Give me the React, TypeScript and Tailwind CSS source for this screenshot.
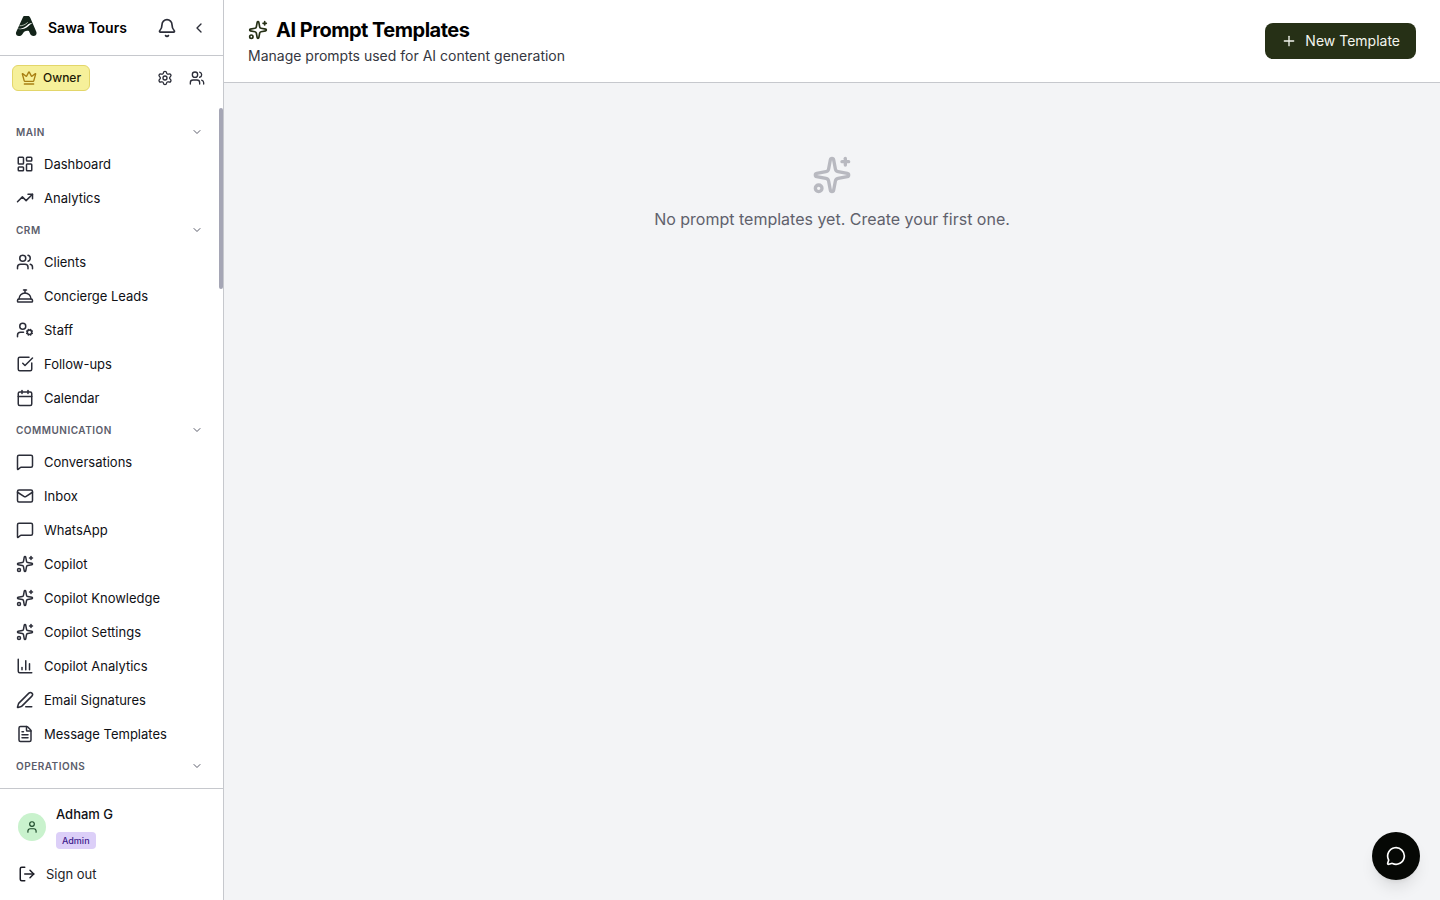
import React from 'react';
import {
  Bell,
  Calendar,
  ChartColumn,
  ChevronDown,
  ChevronLeft,
  ConciergeBell,
  Crown,
  FileText,
  LayoutDashboard,
  LogOut,
  Mail,
  MessageCircle,
  MessageSquare,
  PenLine,
  Plus,
  Settings,
  Sparkles,
  SquareCheckBig,
  TrendingUp,
  User,
  UserCog,
  Users,
} from 'lucide-react';

type IconType = React.ComponentType<{ className?: string }>;

const sections: { title: string; items: { label: string; icon: IconType }[] }[] = [
  {
    title: 'Main',
    items: [
      { label: 'Dashboard', icon: LayoutDashboard },
      { label: 'Analytics', icon: TrendingUp },
    ],
  },
  {
    title: 'CRM',
    items: [
      { label: 'Clients', icon: Users },
      { label: 'Concierge Leads', icon: ConciergeBell },
      { label: 'Staff', icon: UserCog },
      { label: 'Follow-ups', icon: SquareCheckBig },
      { label: 'Calendar', icon: Calendar },
    ],
  },
  {
    title: 'Communication',
    items: [
      { label: 'Conversations', icon: MessageSquare },
      { label: 'Inbox', icon: Mail },
      { label: 'WhatsApp', icon: MessageSquare },
      { label: 'Copilot', icon: Sparkles },
      { label: 'Copilot Knowledge', icon: Sparkles },
      { label: 'Copilot Settings', icon: Sparkles },
      { label: 'Copilot Analytics', icon: ChartColumn },
      { label: 'Email Signatures', icon: PenLine },
      { label: 'Message Templates', icon: FileText },
    ],
  },
  { title: 'Operations', items: [] },
];

const Logo = () => (
  <svg viewBox="0 2 24 24" className="size-6" aria-hidden="true">
    <path
      d="M8.800 3.400C9.600 1.700 11 1.200 12.800 1.400c1.700.2 2.900 1 3.600 2.700l5.800 13.500c1 2.400-.2 4.400-2.600 4.400-1.900 0-3-1-3.700-2.800l-1-2.300c-3-.6-5 .4-6.200 2.800-.8 1.600-2.100 2.300-3.900 2.300-2.400 0-3.500-2-2.500-4.300z"
      fill="#13241a"
    />
    <path d="M2.600 14.800c4.400.2 8-1.100 10.600-3.600 1.400-1.400 2.900-2 5-1.800-1.900.7-2.700 1.700-3.900 2.900-2.700 2.500-6.900 3.600-11.700 2.500z" fill="#fff" />
    <path d="M5.500 11.800c3.200 0 5.800-1.100 8.200-3.400" fill="none" stroke="#c4cec0" strokeWidth=".9" />
  </svg>
);

const Sidebar = () => (
  <aside className="flex h-screen w-56 shrink-0 flex-col border-r border-[#c6c8cd] bg-white">
    <div className="flex h-14 shrink-0 items-center border-b border-[#c6c8cd] pr-[10px] pl-[14px]">
      <Logo />
      <span className="ml-[10px] flex-1 text-sm font-semibold text-black">Sawa Tours</span>
      <button type="button" aria-label="Notifications" className="flex size-9 items-center justify-center text-[#2b2d38]">
        <Bell className="size-5" />
      </button>
      <button type="button" aria-label="Collapse sidebar" className="flex size-7 items-center justify-center text-[#2b2d38]">
        <ChevronLeft className="size-4" />
      </button>
    </div>

    <div className="flex h-[52px] shrink-0 items-start justify-between px-3 pt-[9px]">
      <span className="flex h-[26px] items-center gap-[6px] rounded-md border border-[#e3d66a] bg-[#f6f09a] px-2 text-xs font-medium text-[#1f1a05]">
        <Crown className="size-4 text-[#a87f12]" />
        Owner
      </span>
      <div className="flex gap-1 text-[#2b2d38]">
        <button type="button" aria-label="Settings" className="flex h-[26px] w-7 items-center justify-center">
          <Settings className="size-4" />
        </button>
        <button type="button" aria-label="Team" className="flex h-[26px] w-7 items-center justify-center">
          <Users className="size-4" />
        </button>
      </div>
    </div>

    <div className="relative min-h-0 flex-1">
      <nav className="h-full overflow-hidden px-2 pt-[9px]">
        {sections.map((section) => (
          <div key={section.title}>
            <button
              type="button"
              className="flex h-[30px] w-full items-center justify-between pr-3 pl-2 text-[10px] font-semibold tracking-wider text-[#5b5d6b] uppercase"
            >
              {section.title}
              <ChevronDown className="size-3" />
            </button>
            {section.items.map(({ label, icon: Icon }) => (
              <a key={label} href="#" className="flex h-[34px] items-center gap-[10px] px-2 text-[13px] leading-5 text-[#0f1015]">
                <Icon className="size-[18px] text-[#2b2d38]" />
                {label}
              </a>
            ))}
          </div>
        ))}
      </nav>
      <div className="absolute top-0 right-0 h-[181px] w-1 rounded-full bg-[#a5a6b5]" />
    </div>

    <div className="shrink-0 border-t border-[#c6c8cd] px-[18px] pt-[15px] pb-2">
      <div className="flex items-center gap-[10px]">
        <div className="flex size-7 items-center justify-center rounded-full bg-[#c9f2cd] text-[#1d4a2a]">
          <User className="size-[14px]" />
        </div>
        <div className="flex flex-col items-start gap-2">
          <span className="text-[13px] leading-5 font-medium text-[#0f1015]">Adham G</span>
          <span className="rounded-sm bg-[#dccff8] px-[6px] text-[9px] leading-[17px] font-medium text-[#3c1a8c]">Admin</span>
        </div>
      </div>
      <button type="button" className="mt-[7px] flex h-9 items-center gap-[10px] text-[13px] leading-5 text-[#1c1d26]">
        <LogOut className="size-[18px]" />
        Sign out
      </button>
    </div>
  </aside>
);

const App: React.FC = () => {
  return (
    <div className="flex min-h-screen bg-[#f3f4f6] font-[Inter,sans-serif]">
      <Sidebar />
      <main className="min-w-0 flex-1">
        <header className="flex items-center justify-between border-b border-[#c6c8cd] bg-white px-6 py-4">
          <div>
            <h1 className="flex items-center gap-2 text-xl leading-7 font-bold tracking-tight text-black">
              <Sparkles className="size-5 text-[#263016]" />
              AI Prompt Templates
            </h1>
            <p className="mt-[2px] text-sm text-[#353741]">Manage prompts used for AI content generation</p>
          </div>
          <button type="button" className="flex h-9 items-center gap-2 rounded-lg bg-[#263016] px-4 text-sm text-[#f3f5ee]">
            <Plus className="size-4" />
            New Template
          </button>
        </header>

        <div className="flex flex-col items-center px-6 pt-[72px] text-center">
          <Sparkles className="size-10 text-[#b8b9c0]" />
          <p className="mt-3 text-base text-[#5f616c]">No prompt templates yet. Create your first one.</p>
        </div>
      </main>

      <button
        type="button"
        aria-label="Open chat"
        className="fixed right-5 bottom-5 flex size-12 items-center justify-center rounded-full bg-[#060805] text-white shadow-lg"
      >
        <MessageCircle className="size-5" />
      </button>
    </div>
  );
};

export default App;
